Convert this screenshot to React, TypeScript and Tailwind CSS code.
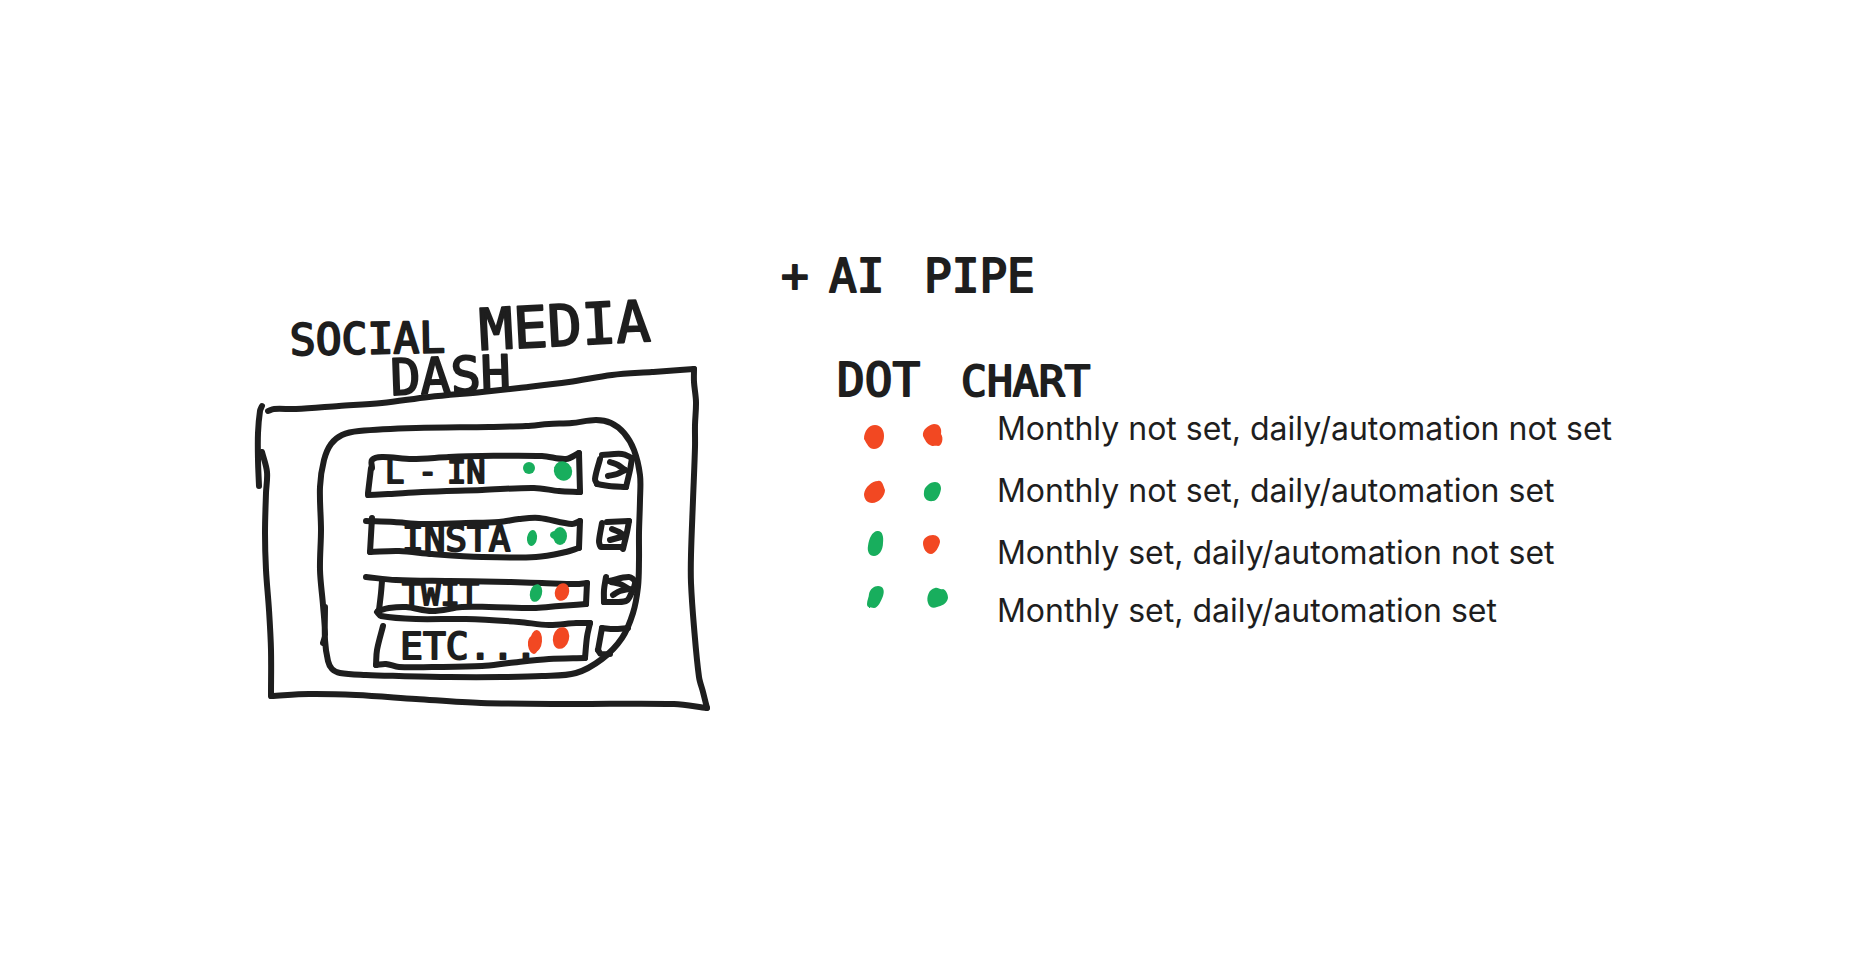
import type { ReactNode } from "react";

const INK = "#1e1e1e";
const GREEN = "#18ae5d";
const RED = "#f24822";

type Point = [number, number];

function distance(a: Point, b: Point): number {
  return Math.hypot(b[0] - a[0], b[1] - a[1]);
}

/** Direction of travel at point i, scaled so that it has about unit length. */
function tangent(points: Point[], i: number): Point {
  const before = points[Math.max(i - 1, 0)];
  const after = points[Math.min(i + 1, points.length - 1)];
  const span = distance(before, points[i]) + distance(points[i], after);
  return [(after[0] - before[0]) / span, (after[1] - before[1]) / span];
}

/** Turns a list of points into a smooth pen stroke that passes through each one. */
function smooth(points: Point[]): string {
  let d = `M${points[0][0]} ${points[0][1]}`;
  for (let i = 0; i < points.length - 1; i++) {
    const [a, b] = [points[i], points[i + 1]];
    const reach = distance(a, b) / 3;
    const ta = tangent(points, i);
    const tb = tangent(points, i + 1);
    d += `C${a[0] + ta[0] * reach} ${a[1] + ta[1] * reach} ${b[0] - tb[0] * reach} ${b[1] - tb[1] * reach} ${b[0]} ${b[1]}`;
  }
  return d;
}

const strokes: Point[][] = [
  // outer frame
  [[263, 406], [261, 411], [259, 433], [259, 460], [260, 486]],
  [[263, 452], [268, 472], [267, 493], [266, 533], [267, 570], [270, 610], [272, 650], [272, 695]],
  [[269, 411], [275, 409], [297, 409], [340, 406], [383, 403], [430, 397], [483, 392], [520, 388], [570, 382], [613, 375], [653, 372], [695, 369]],
  [[695, 369], [695, 382], [697, 402], [696, 425], [696, 447], [694, 500], [692, 555], [692, 583], [695, 627], [700, 677], [704, 692], [708, 708]],
  [[272, 696], [310, 694], [357, 695], [417, 699], [482, 703], [571, 704], [675, 704], [708, 708]],
  // rounded inner panel
  [[324, 643], [326, 635], [324, 605], [321, 570], [322, 530], [321, 487], [325, 460], [332, 444], [343, 435], [360, 431], [417, 428], [490, 427], [527, 426], [550, 424], [573, 423], [597, 420], [612, 423], [625, 433], [635, 450], [641, 475], [641, 500], [640, 533], [640, 560], [639, 587], [634, 613], [623, 638], [603, 659], [577, 673], [543, 676], [503, 677], [450, 677], [400, 676], [367, 675], [341, 673], [333, 669], [329, 661], [326, 640], [326, 607]],
  // row 1
  [[373, 468], [373, 460], [383, 457], [413, 459], [450, 457], [483, 456], [543, 456], [567, 459], [580, 453]],
  [[372, 468], [369, 493]],
  [[369, 495], [390, 494], [423, 492], [483, 490], [535, 488], [560, 491], [581, 492]],
  [[580, 453], [581, 492]],
  // row 2
  [[367, 521], [395, 522], [423, 524], [467, 523], [500, 522], [520, 519], [540, 518], [573, 524], [581, 521]],
  [[581, 521], [580, 548]],
  [[580, 548], [567, 552], [537, 557], [483, 557], [433, 554], [400, 551], [371, 552]],
  [[373, 518], [371, 552]],
  // row 3
  [[367, 577], [397, 580], [450, 581], [510, 582], [543, 583], [577, 584], [588, 583]],
  [[588, 583], [587, 604]],
  [[587, 604], [560, 606], [537, 608], [490, 607], [463, 607], [433, 611], [407, 607], [390, 608], [379, 611]],
  [[383, 581], [382, 593], [380, 610]],
  // row 4
  [[378, 612], [382, 616], [417, 619], [467, 619], [520, 622], [550, 625], [577, 623], [591, 623]],
  [[591, 623], [588, 637], [586, 658]],
  [[586, 658], [550, 659], [510, 663], [483, 666], [433, 667], [400, 667], [387, 664], [377, 665]],
  [[377, 665], [378, 650], [384, 626]],
  // arrow box 1
  [[603, 455], [623, 454], [633, 458]],
  [[633, 458], [631, 470], [627, 487]],
  [[627, 487], [610, 486], [598, 484]],
  [[598, 484], [596, 479], [601, 459]],
  [[611, 462], [619, 465], [626, 470]],
  [[626, 470], [618, 474], [609, 476]],
  // arrow box 2
  [[608, 522], [630, 521]],
  [[630, 521], [628, 532], [624, 549]],
  [[624, 547], [602, 547]],
  [[601, 546], [600, 541], [603, 523]],
  [[613, 529], [620, 532], [626, 536]],
  [[626, 536], [611, 540]],
  // arrow box 3
  [[607, 577], [605, 590], [605, 602]],
  [[605, 602], [627, 601], [632, 594], [636, 582], [630, 577], [610, 581]],
  [[612, 582], [621, 584], [630, 589]],
  [[630, 589], [621, 591], [614, 595]],
  // arrow box 4
  [[629, 628], [615, 629], [603, 628]],
  [[603, 628], [599, 650]],
  [[599, 650], [602, 654], [611, 654]],
];

interface Blob {
  x: number;
  y: number;
  rx: number;
  ry: number;
  tilt?: number;
  fill: string;
}

const statusDots: Blob[] = [
  { x: 530, y: 468, rx: 6, ry: 6, fill: GREEN },
  { x: 564, y: 471, rx: 9, ry: 10, tilt: -25, fill: GREEN },
  { x: 533, y: 538, rx: 5, ry: 8, tilt: 8, fill: GREEN },
  { x: 561, y: 536, rx: 7, ry: 9, fill: GREEN },
  { x: 556, y: 535, rx: 5, ry: 4, fill: GREEN },
  { x: 537, y: 593, rx: 6, ry: 9, tilt: 14, fill: GREEN },
  { x: 563, y: 592, rx: 7, ry: 9, tilt: 20, fill: RED },
  { x: 537, y: 641, rx: 6, ry: 11, tilt: 5, fill: RED },
  { x: 534, y: 645, rx: 5, ry: 9, tilt: -8, fill: RED },
  { x: 562, y: 638, rx: 8, ry: 11, tilt: 14, fill: RED },
];

const chartDots: { fill: string; d: string }[] = [
  { fill: RED, d: "M876 425C882 425 885 430 885 436C885 443 881 449 875 449C870 449 868 444 865 439C865 431 870 425 876 425Z" },
  { fill: RED, d: "M935 424C941 424 943 429 942 434C945 438 943 446 939 446C936 445 934 447 931 445C928 444 926 440 924 436C923 430 929 425 935 424Z" },
  { fill: RED, d: "M879 481C883 480 884 485 886 490C886 496 880 503 873 503C868 503 865 499 865 494C866 487 873 481 879 481Z" },
  { fill: GREEN, d: "M936 482C940 482 942 485 942 489C941 495 938 501 934 501C928 502 924 498 925 492C925 487 931 482 936 482Z" },
  { fill: GREEN, d: "M878 531C883 530 885 536 884 543C884 550 880 556 875 556C870 556 868 551 869 546C870 538 873 532 878 531Z" },
  { fill: RED, d: "M934 535C938 535 941 538 941 542C940 547 936 554 932 554C927 554 924 548 924 543C924 538 929 535 934 535Z" },
  { fill: GREEN, d: "M879 586C884 586 886 590 884 596C882 601 879 608 875 608C871 607 868 608 868 604C868 600 870 597 870 594C871 589 875 586 879 586Z" },
  { fill: GREEN, d: "M936 588C939 587 941 590 944 589C947 590 949 594 949 598C948 604 942 606 938 607C934 609 930 607 929 603C927 597 930 589 936 588Z" },
];

interface MarkerProps {
  x: number;
  y: number;
  size: number;
  tilt?: number;
  children: ReactNode;
}

function Marker({ x, y, size, tilt = 0, children }: MarkerProps) {
  return (
    <text
      x={x}
      y={y}
      fontSize={size}
      transform={`rotate(${tilt} ${x} ${y})`}
      fill={INK}
      stroke={INK}
      strokeWidth={2}
      strokeLinejoin="round"
      className="font-['DejaVu_Sans_Mono',monospace]"
    >
      {children}
    </text>
  );
}

function DashboardSketch() {
  return (
    <svg
      viewBox="256 300 456 412"
      className="w-[456px] shrink-0 self-end overflow-visible"
      role="img"
      aria-label="Social media dash"
    >
      <Marker x={291} y={355} size={43} tilt={-1}>SOCIAL</Marker>
      <Marker x={481} y={350} size={57} tilt={-3}>MEDIA</Marker>
      <Marker x={392} y={395} size={50} tilt={-2}>DASH</Marker>
      <g fill="none" stroke={INK} strokeWidth={6} strokeLinecap="round" strokeLinejoin="round">
        {strokes.map((points, i) => (
          <path key={i} d={smooth(points)} />
        ))}
      </g>
      <Marker x={386} y={483} size={32}>
        L<tspan x={419}>-</tspan>
        <tspan x={448}>IN</tspan>
      </Marker>
      <Marker x={403} y={551} size={36}>INSTA</Marker>
      <Marker x={403} y={605} size={32}>TWIT</Marker>
      <Marker x={401} y={659} size={38}>ETC...</Marker>
      {statusDots.map((dot, i) => (
        <ellipse
          key={i}
          cx={dot.x}
          cy={dot.y}
          rx={dot.rx}
          ry={dot.ry}
          fill={dot.fill}
          transform={`rotate(${dot.tilt ?? 0} ${dot.x} ${dot.y})`}
        />
      ))}
    </svg>
  );
}

function Heading({ children }: { children: ReactNode }) {
  return (
    <svg viewBox="0 0 264 44" className="block h-11 w-[264px] overflow-visible">
      <Marker x={2} y={36} size={46}>{children}</Marker>
    </svg>
  );
}

const legend = [
  "Monthly not set, daily/automation not set",
  "Monthly not set, daily/automation set",
  "Monthly set, daily/automation not set",
  "Monthly set, daily/automation set",
];

export default function App() {
  return (
    <main className="flex min-h-screen items-center justify-center bg-white text-[#1e1e1e]">
      <div className="flex gap-[68px]">
        <DashboardSketch />
        <section className="flex h-[456px] flex-col">
          <h1>
            <Heading>
              + <tspan x={50}>AI </tspan>
              <tspan x={145}>PIPE</tspan>
            </Heading>
          </h1>
          <h2 className="mt-[60px] pl-14">
            <Heading>
              <tspan>DOT </tspan>
              <tspan x={126} fontSize={43}>CHART</tspan>
            </Heading>
          </h2>
          <div className="mt-[5px] flex gap-[46px] pl-20">
            <svg viewBox="860 409 92 208" className="h-[208px] w-[92px]" aria-hidden="true">
              {chartDots.map((dot, i) => (
                <path key={i} d={dot.d} fill={dot.fill} />
              ))}
            </svg>
            <ul className="grid grid-rows-[62px_62px_58px_40px] font-[Inter,sans-serif] text-[32px] leading-10 whitespace-nowrap">
              {legend.map((label) => (
                <li key={label}>{label}</li>
              ))}
            </ul>
          </div>
        </section>
      </div>
    </main>
  );
}
